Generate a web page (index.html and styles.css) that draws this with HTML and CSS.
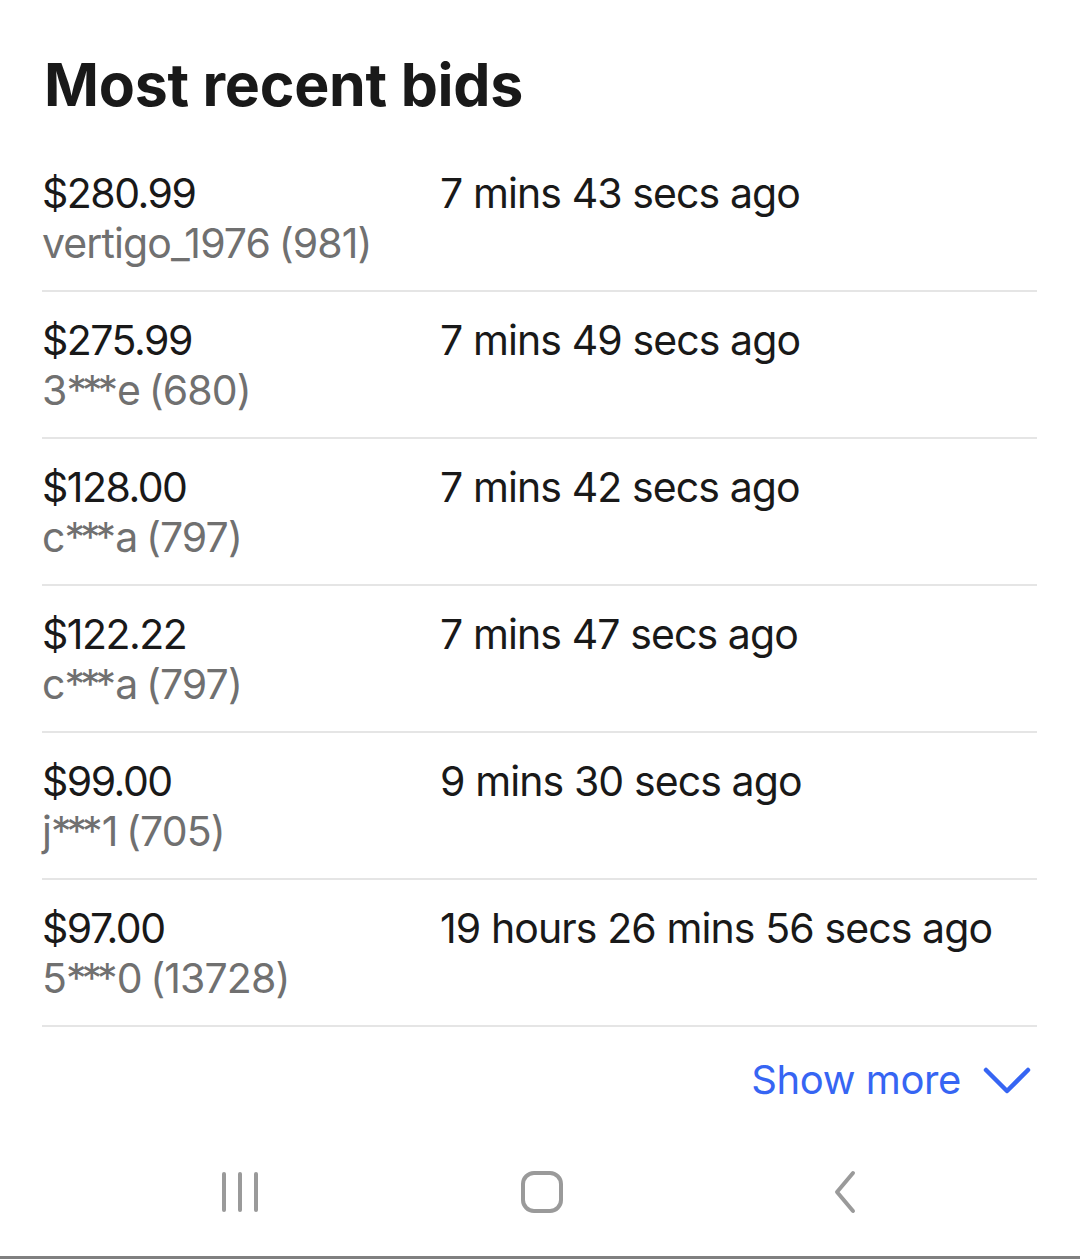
FILE: index.html
```html
<!DOCTYPE html>
<html>
<head>
<meta charset="utf-8">
<link rel="stylesheet" href="styles.css">
</head>
<body>
<div class="screen">
  <main class="content">
    <h1 class="title">Most recent bids</h1>
    <ul class="bids">
      <li class="bid">
        <div class="who"><div class="price">$280.99</div><div class="user">vertigo_1976 (981)</div></div>
        <div class="time">7 mins 43 secs ago</div>
      </li>
      <li class="bid">
        <div class="who"><div class="price">$275.99</div><div class="user">3<span class="mask">***</span>e (680)</div></div>
        <div class="time">7 mins 49 secs ago</div>
      </li>
      <li class="bid">
        <div class="who"><div class="price">$128.00</div><div class="user">c<span class="mask">***</span>a (797)</div></div>
        <div class="time">7 mins 42 secs ago</div>
      </li>
      <li class="bid">
        <div class="who"><div class="price">$122.22</div><div class="user">c<span class="mask">***</span>a (797)</div></div>
        <div class="time">7 mins 47 secs ago</div>
      </li>
      <li class="bid">
        <div class="who"><div class="price">$99.00</div><div class="user">j<span class="mask">***</span>1 (705)</div></div>
        <div class="time">9 mins 30 secs ago</div>
      </li>
      <li class="bid">
        <div class="who"><div class="price">$97.00</div><div class="user">5<span class="mask">***</span>0 (13728)</div></div>
        <div class="time">19 hours 26 mins 56 secs ago</div>
      </li>
    </ul>
    <div class="more-row">
      <a class="more" href="#">Show more
        <svg class="chev" width="48" height="30" viewBox="0 0 48 30"><path d="M3 4 L24 25 L45 4" fill="none" stroke="#3665f3" stroke-width="4.5" stroke-linecap="round" stroke-linejoin="round"/></svg>
      </a>
    </div>
  </main>
  <nav class="navbar">
    <svg class="nav-recent" width="40" height="42" viewBox="0 0 40 42"><g stroke="#9a9a9a" stroke-width="4" stroke-linecap="round"><line x1="4" y1="3" x2="4" y2="39"/><line x1="20" y1="3" x2="20" y2="39"/><line x1="36" y1="3" x2="36" y2="39"/></g></svg>
    <svg class="nav-home" width="44" height="44" viewBox="0 0 44 44"><rect x="3" y="3" width="38" height="38" rx="11" fill="none" stroke="#9a9a9a" stroke-width="4"/></svg>
    <svg class="nav-back" width="30" height="44" viewBox="0 0 30 44"><path d="M24 3 L8 22 L24 41" fill="none" stroke="#9a9a9a" stroke-width="4" stroke-linecap="round" stroke-linejoin="round"/></svg>
  </nav>
  <div class="bottom-line"></div>
</div>
</body>
</html>
```
FILE: styles.css
```css
* { box-sizing: border-box; }
html, body { margin: 0; padding: 0; background: #fff; }
body { font-family: Inter, Roboto, "Liberation Sans", sans-serif; color: #191919; }
.screen { width: 1080px; height: 1259px; display: flex; flex-direction: column; }
.content { padding: 0 43px 0 42px; flex: 1; }
.title { margin: 0; padding-top: 50px; height: 145px; font-size: 59px; font-weight: 700; letter-spacing: -0.25px; line-height: 70px; padding-left: 2px; color: #191919; }
.bids { list-style: none; margin: 0; padding: 0; }
.bid { display: flex; padding: 23px 0 22px; border-bottom: 2px solid #e5e5e5; }
.who { width: 398px; flex: none; }
.price { font-size: 41px; line-height: 50px; color: #191919; letter-spacing: -1.5px; }
.time { font-size: 41px; line-height: 50px; color: #191919; letter-spacing: -0.9px; }
.user { font-size: 41px; line-height: 50px; color: #707070; letter-spacing: -0.9px; word-spacing: -2px; }
.mask { letter-spacing: -5px; margin-right: 4px; }
.more-row { display: flex; justify-content: flex-end; padding-top: 28px; padding-right: 6px; }
.more { display: flex; align-items: center; gap: 22px; color: #3665f3; text-decoration: none; font-size: 40px; line-height: 50px; letter-spacing: -0.4px; }
.chev { display: block; margin-top: 2px; }
.navbar { height: 120px; display: flex; align-items: center; padding-bottom: 8px; }
.nav-recent { margin-left: 220px; }
.nav-home { margin-left: 260px; }
.nav-back { margin-left: 265px; }
.bottom-line { height: 3px; background: #808080; }
```
